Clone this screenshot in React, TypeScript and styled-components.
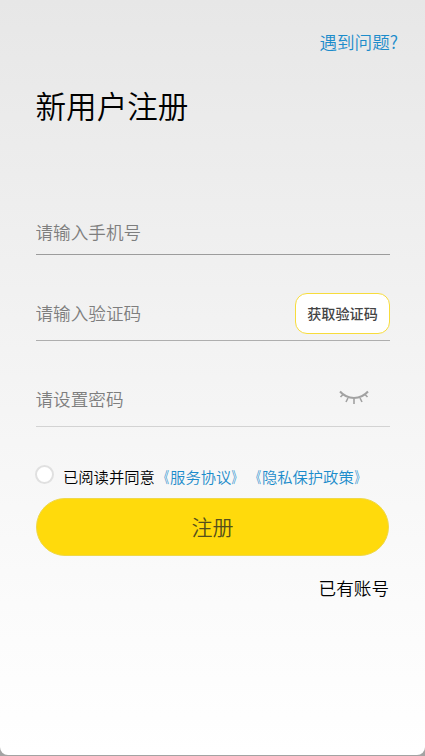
import React from "react";
import styled, { createGlobalStyle } from "styled-components";

const GlobalStyle = createGlobalStyle`
  * { box-sizing: border-box; }
  body { margin: 0; background: #a3a3a3; overflow: hidden; }
  button, input, a {
    font-family: "Noto Sans CJK SC", sans-serif;
  }
`;

const Screen = styled.main`
  display: flex;
  flex-direction: column;
  width: 425px;
  height: 755px;
  padding: 30px 36px 0;
  border-radius: 0 0 8px 8px;
  background: linear-gradient(#e7e7e7 0%, #f4f4f4 50%, #fbfbfb 80%, #ffffff 100%);
  font-family: "Noto Sans CJK SC", sans-serif;
  font-weight: 350;
  color: #000;
`;

const HelpLink = styled.a`
  align-self: flex-end;
  margin-right: -9px;
  font-size: 17.6px;
  line-height: 24px;
  color: #1c8ccb;
`;

const Title = styled.h1`
  margin: 29px 0 0 -0.5px;
  font-size: 30.6px;
  font-weight: 350;
  line-height: 44px;
`;

const Form = styled.form`
  display: flex;
  flex-direction: column;
  margin-top: 83px;
`;

const Field = styled.div<{ $height: number; $inset: number; $line: string }>`
  display: flex;
  align-items: center;
  width: 354px;
  height: ${(p) => p.$height}px;
  padding-top: ${(p) => p.$inset}px;
  border-bottom: 1px solid ${(p) => p.$line};
`;

const Input = styled.input`
  flex: 1;
  min-width: 0;
  height: 30px;
  margin: -2px 0 0 -0.5px;
  padding: 0;
  border: 0;
  outline: 0;
  background: transparent;
  font-size: 17.6px;
  font-weight: 350;
  color: #333;
  &::placeholder { color: #7e7e7e; opacity: 1; }
`;

const CodeButton = styled.button`
  width: 95px;
  height: 41px;
  padding: 0 0 1px;
  border: 1px solid #f7dc3c;
  border-radius: 12px;
  background: #fff;
  font-size: 14.1px;
  font-weight: 500;
  color: #444;
`;

const ClosedEye = styled.svg`
  width: 30px;
  height: 16px;
  margin: -5px 21px 0 0;
  fill: none;
  stroke: #a2a2a2;
`;

const Terms = styled.div`
  display: flex;
  align-items: center;
  height: 24px;
  margin-top: 37px;
  font-size: 15.3px;
  text-spacing-trim: space-all;
  white-space: nowrap;
`;

const Radio = styled.span`
  flex: none;
  width: 19px;
  height: 19px;
  margin: -4px 9px 0 -1px;
  border: 2px solid #e0e0e0;
  border-radius: 50%;
  background: #fff;
`;

const PolicyLink = styled.a`
  color: #1c8ccb;
`;

const Bracket = styled.span<{ $side: "open" | "close" }>`
  display: inline-block;
  width: 1em;
  transform: scaleX(0.68);
  transform-origin: ${(p) => (p.$side === "open" ? "75%" : "10%")} 50%;
`;

const SubmitButton = styled.button`
  width: 353px;
  height: 58px;
  margin-top: 10px;
  padding: 0 0 2px;
  border: 1px solid #efd849;
  border-radius: 29px;
  background: #ffda0c;
  font-size: 21px;
  font-weight: 350;
  color: #55501c;
`;

const LoginLink = styled.a`
  align-self: flex-end;
  margin-top: 20px;
  font-size: 17.6px;
  line-height: 24px;
`;

function Policy({ name }: { name: string }) {
  return (
    <PolicyLink>
      <Bracket $side="open">《</Bracket>
      {name}
      <Bracket $side="close">》</Bracket>
    </PolicyLink>
  );
}

export default function App() {
  return (
    <>
      <GlobalStyle />
      <Screen>
        <HelpLink>遇到问题?</HelpLink>
        <Title>新用户注册</Title>
        <Form>
          <Field $height={45} $inset={0} $line="#9c9c9c">
            <Input placeholder="请输入手机号" />
          </Field>
          <Field $height={86} $inset={32} $line="#aeaeae">
            <Input placeholder="请输入验证码" />
            <CodeButton type="button">获取验证码</CodeButton>
          </Field>
          <Field $height={86} $inset={31} $line="#d3d3d3">
            <Input placeholder="请设置密码" />
            <ClosedEye viewBox="0 0 30 16">
              <path d="M1 2.5C8.5 11 21.5 11 29 2.5" strokeWidth="2" />
              <path d="M4 5.5L1.5 8M9 9L7 13M15 9.5V15M21 9L23 13M26 5.5L28.5 8" strokeWidth="1.6" />
            </ClosedEye>
          </Field>
          <Terms>
            <Radio />
            <span>已阅读并同意</span>
            <Policy name="服务协议" />
            <Policy name="隐私保护政策" />
          </Terms>
          <SubmitButton type="button">注册</SubmitButton>
          <LoginLink>已有账号</LoginLink>
        </Form>
      </Screen>
    </>
  );
}
